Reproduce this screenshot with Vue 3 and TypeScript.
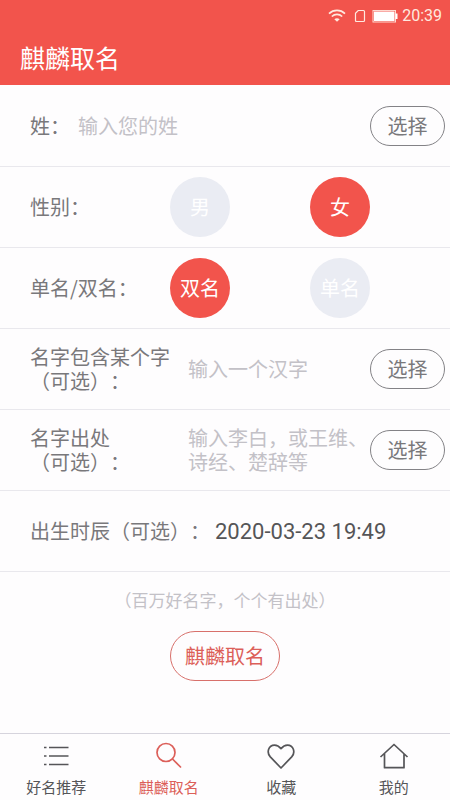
<script setup lang="ts">
import { ref } from 'vue'

type TabId = 'list' | 'search' | 'heart' | 'home'

const surname = ref('')
const gender = ref('女')
const nameKind = ref('双名')
const includedChar = ref('')
const source = ref('')
const birthTime = ref('2020-03-23 19:49')
const activeTab = ref<TabId>('search')

const genders: string[] = ['男', '女']
const nameKinds: string[] = ['双名', '单名']
const tabs: { id: TabId; label: string }[] = [
  { id: 'list', label: '好名推荐' },
  { id: 'search', label: '麒麟取名' },
  { id: 'heart', label: '收藏' },
  { id: 'home', label: '我的' },
]
</script>

<template>
  <div class="page">
    <header class="header">
      <div class="status">
        <svg class="wifi" viewBox="0 0 18 13" aria-hidden="true">
          <path d="M1 4.6C5.500 .3 12.500 .3 17 4.600M3.800 7.500c3-2.800 7.400-2.800 10.400 0" fill="none" stroke="currentColor" stroke-width="1.7" />
          <path d="M6.300 10.200c1.600-1.400 3.800-1.400 5.400 0L9 12.800z" fill="currentColor" />
        </svg>
        <svg class="sim" viewBox="0 0 12 14" aria-hidden="true">
          <path d="M4.200 1.500h5.300q1 0 1 1v9q0 1-1 1h-7q-1 0-1-1V4.300z" fill="none" stroke="currentColor" stroke-width="1.200" />
        </svg>
        <svg class="battery" viewBox="0 0 26 14" aria-hidden="true">
          <rect x="1" y="1.500" width="22.500" height="11.500" fill="none" stroke="#ffd9d0" stroke-width="1" />
          <rect x="2" y="2.500" width="20.500" height="9.500" fill="currentColor" />
          <rect x="23.500" y="4.500" width="2" height="5.500" fill="currentColor" />
        </svg>
        <span>20:39</span>
      </div>
      <h1 class="title">麒麟取名</h1>
    </header>

    <main class="main">
      <form class="form" @submit.prevent>
        <div class="row">
          <label for="surname">姓：</label>
          <input id="surname" v-model="surname" class="field" type="text" placeholder="输入您的姓" />
          <button class="pick" type="button">选择</button>
        </div>

        <div class="row" role="radiogroup" aria-labelledby="gender-label">
          <span id="gender-label" class="choice-label">性别：</span>
          <div class="choices">
            <label v-for="g in genders" :key="g" class="choice">
              <input v-model="gender" type="radio" name="gender" :value="g" />
              <span>{{ g }}</span>
            </label>
          </div>
        </div>

        <div class="row" role="radiogroup" aria-labelledby="kind-label">
          <span id="kind-label" class="choice-label">单名/双名：</span>
          <div class="choices">
            <label v-for="k in nameKinds" :key="k" class="choice">
              <input v-model="nameKind" type="radio" name="kind" :value="k" />
              <span>{{ k }}</span>
            </label>
          </div>
        </div>

        <div class="row">
          <label class="wide-label" for="included">名字包含某个字<br />（可选）：</label>
          <input id="included" v-model="includedChar" class="field" type="text" placeholder="输入一个汉字" />
          <button class="pick" type="button">选择</button>
        </div>

        <div class="row">
          <label class="wide-label" for="source">名字出处<br />（可选）：</label>
          <textarea id="source" v-model="source" class="field" rows="2" placeholder="输入李白，或王维、诗经、楚辞等"></textarea>
          <button class="pick" type="button">选择</button>
        </div>

        <div class="row date-row">
          <label for="birth">出生时辰（可选）：</label>
          <input id="birth" v-model="birthTime" class="field date" type="text" />
        </div>

        <div class="finish">
          <p class="hint">（百万好名字，个个有出处）</p>
          <button class="submit" type="submit">麒麟取名</button>
        </div>
      </form>
    </main>

    <nav class="tabs">
      <a
        v-for="tab in tabs"
        :key="tab.id"
        class="tab"
        :class="{ active: tab.id === activeTab }"
        :href="'#' + tab.id"
        @click.prevent="activeTab = tab.id"
      >
        <svg class="tab-icon" viewBox="0 0 30 30" fill="none" stroke="currentColor" stroke-width="1.700" aria-hidden="true">
          <path v-if="tab.id === 'list'" d="M3 6.500h2.500M8 6.500h19.500M3 15h2.500M8 15h19.500M3 23.500h2.500M8 23.500h19.500" />
          <template v-else-if="tab.id === 'search'">
            <circle cx="12" cy="11.500" r="9" />
            <path d="M18.500 18 27 26.500" />
          </template>
          <path v-else-if="tab.id === 'heart'" d="M15 27 4.300 15.900C.2 11.300 2.600 4.200 8.500 4.200c2.900 0 4.700 1.300 6.500 3.500 1.800-2.200 3.600-3.500 6.500-3.500 5.900 0 8.300 7.100 4.200 11.700z" stroke-linejoin="round" />
          <path v-else d="M1.500 16 15 3.500 28.500 16M5.500 12.600V26.700h19.500V12.600" stroke-linejoin="round" />
        </svg>
        <span>{{ tab.label }}</span>
      </a>
    </nav>
  </div>
</template>

<style>
body {
  margin: 0;
}
</style>

<style scoped>
.page {
  display: flex;
  flex-direction: column;
  min-height: 100vh;
  background: #fefdfe;
  color: #79787b;
  font-family: "Noto Sans CJK SC", Roboto, sans-serif;
  font-size: 20px;
  line-height: 24px;
  text-spacing-trim: space-all;
}

.page * {
  box-sizing: border-box;
}

button,
input,
textarea {
  margin: 0;
  padding: 0;
  font: inherit;
  color: inherit;
  text-spacing-trim: inherit;
}

.header {
  background: #f2544c;
  color: #fff;
}

.status {
  display: flex;
  align-items: center;
  justify-content: flex-end;
  height: 30px;
  padding: 1px 8px 0 0;
  color: #ffe9df;
  font-family: Roboto, sans-serif;
  font-size: 16px;
}

.wifi {
  width: 18px;
  height: 13px;
  margin-right: 8px;
}

.sim {
  width: 12px;
  height: 14px;
  margin-right: 6px;
}

.battery {
  width: 26px;
  height: 14px;
  margin-right: 4px;
  color: #fff;
}

.title {
  margin: 0;
  padding: 12px 20px 13px;
  font-size: 25px;
  font-weight: 400;
  line-height: 30px;
}

.main {
  flex: 1;
}

.row {
  display: flex;
  align-items: center;
  gap: 8px;
  min-height: 81px;
  padding: 0 5px 0 30px;
  border-bottom: 1px solid #e9e8ed;
}

.row:first-child {
  min-height: 82px;
}

.row > label,
.choice-label {
  flex: none;
}

.row > .wide-label {
  width: 150px;
  padding-top: 2px;
  font-family: Roboto, "Noto Sans CJK SC", sans-serif;
}

.choice-label {
  width: 132px;
}

.field {
  flex: 1;
  min-width: 0;
  border: 0;
  outline: 0;
  background: transparent;
}

textarea.field {
  display: block;
  height: 48px;
  margin-right: -8px;
  resize: none;
  overflow: hidden;
}

.field::placeholder {
  color: #c3c1c7;
  opacity: 1;
}

.date-row {
  gap: 5px;
}

.date {
  padding-top: 2px;
  color: #555557;
  font-family: Roboto, sans-serif;
  font-size: 22px;
}

.pick {
  flex: none;
  width: 75px;
  height: 40px;
  border: 1px solid #838286;
  border-radius: 20px;
  background: transparent;
}

.choices {
  display: flex;
  gap: 80px;
}

.choice {
  display: grid;
  place-items: center;
  color: #fff;
  cursor: pointer;
}

.choice input,
.choice span {
  grid-area: 1 / 1;
}

.choice span {
  z-index: 1;
}

.choice input {
  width: 60px;
  height: 60px;
  border-radius: 50%;
  background: #eaecf3;
  appearance: none;
}

.choice input:checked {
  background: #f2544c;
}

.finish {
  display: flex;
  flex-direction: column;
  align-items: center;
  gap: 19px;
  padding: 16px 0 20px;
}

.hint {
  margin: 0;
  color: #c3c1c7;
  font-size: 17px;
}

.submit {
  width: 110px;
  height: 50px;
  border: 1px solid #d8706b;
  border-radius: 25px;
  background: transparent;
  color: #dc5f59;
}

.tabs {
  display: flex;
  border-top: 1px solid #d6d4dd;
}

.tab {
  display: flex;
  flex: 1;
  flex-direction: column;
  align-items: center;
  gap: 4px;
  padding: 7px 0 2px;
  color: #555558;
  font-size: 15px;
  line-height: 23px;
  text-decoration: none;
}

.tab.active {
  color: #dc5f59;
}

.tab-icon {
  width: 30px;
  height: 30px;
}
</style>
